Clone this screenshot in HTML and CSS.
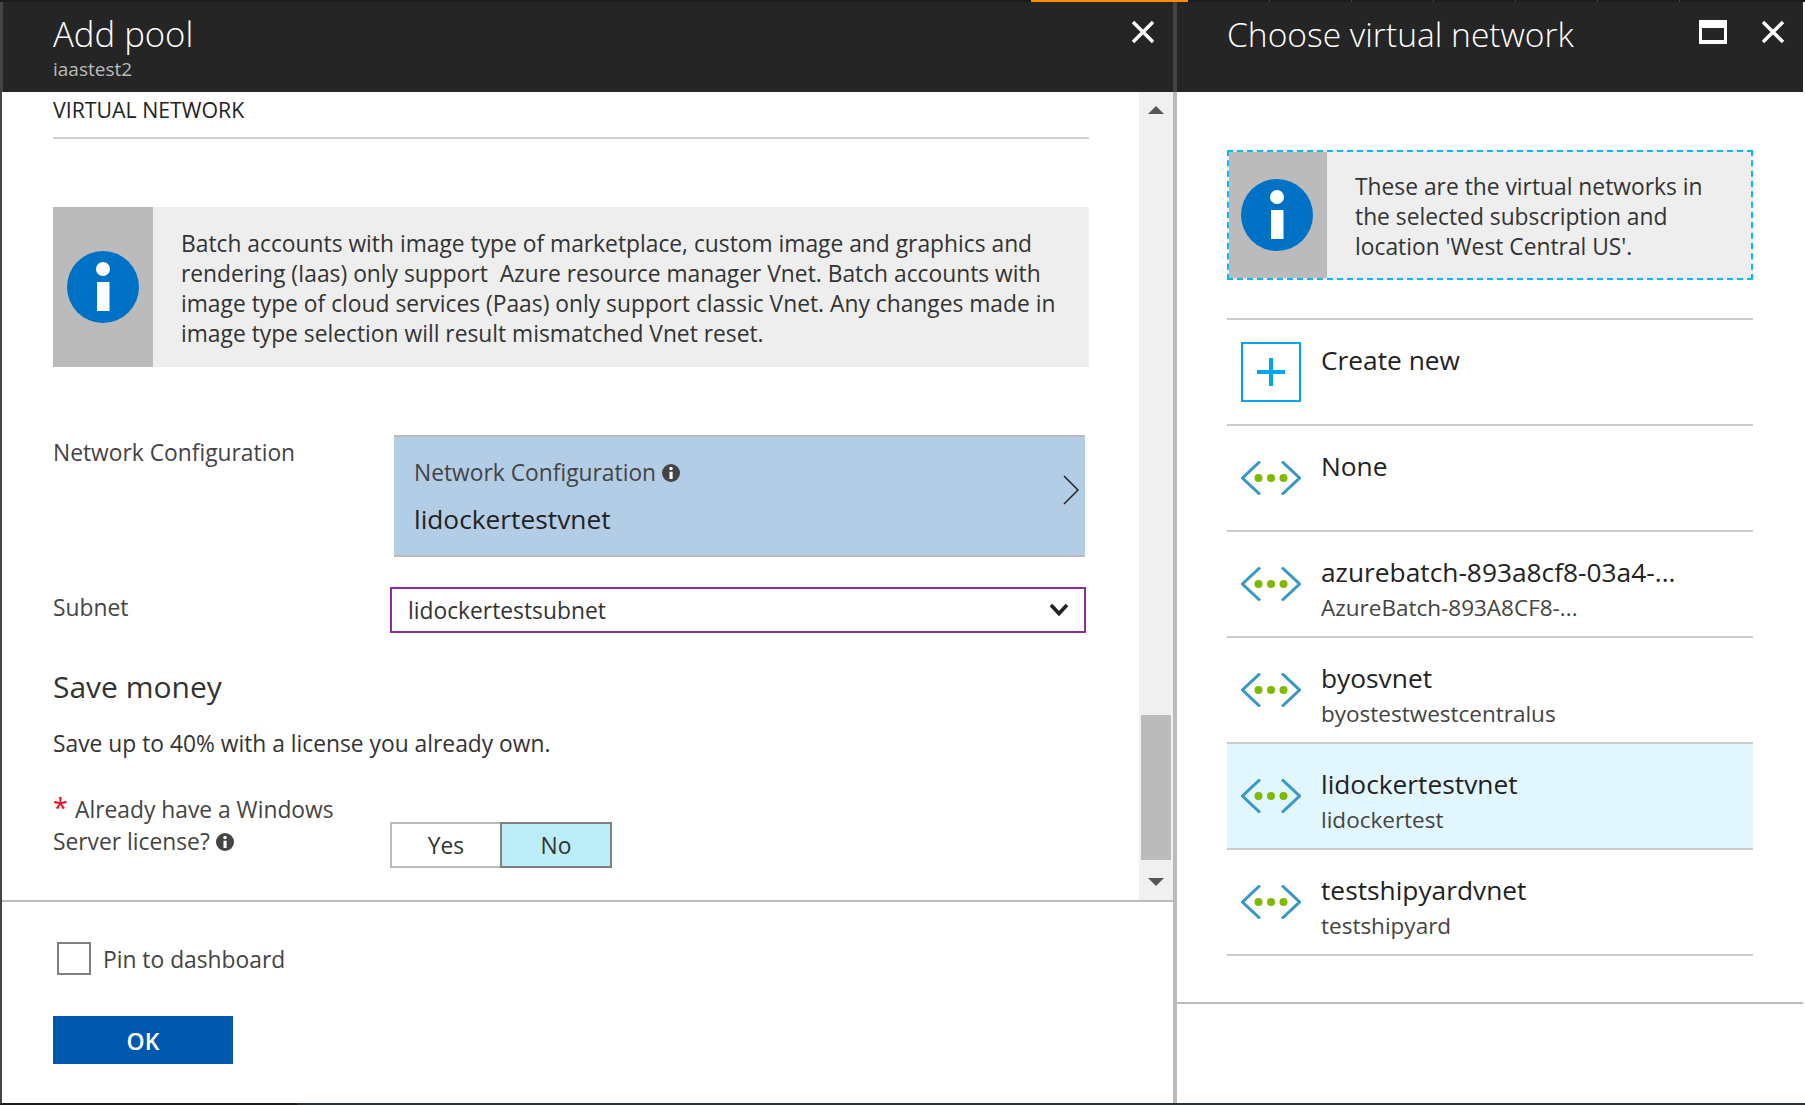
FILE: index.html
```html
<!DOCTYPE html>
<html lang="en">
<head>
    <meta charset="UTF-8">
    <title>Add pool</title>
    <link rel="stylesheet" href="styles.css">
</head>
<body>
    <svg class="sprites" width="0" height="0">
        <symbol id="info" viewBox="0 0 72 72">
            <circle cx="36" cy="36" r="36" fill="currentColor"/>
            <circle cx="36" cy="18" r="7" fill="#fff"/>
            <rect x="30" y="31" width="12.5" height="29" fill="#fff"/>
        </symbol>
        <symbol id="close" viewBox="0 0 24 24">
            <path d="M2 2 22 22M22 2 2 22" fill="none" stroke="#fff" stroke-width="3.4"/>
        </symbol>
        <symbol id="vnet" viewBox="0 0 60 34">
            <path d="M19 .5 1.5 17 19 33.5M41 .5 58.5 17 41 33.5" fill="none" stroke="#3999c6" stroke-width="3"/>
            <circle cx="17.5" cy="17" r="4" fill="#7fba00"/>
            <circle cx="30" cy="17" r="4" fill="#7fba00"/>
            <circle cx="42.5" cy="17" r="4" fill="#7fba00"/>
        </symbol>
    </svg>

    <div class="topbar">
        <span class="tab tab-first"></span>
        <span class="tab tab-active"></span>
        <span class="tab"></span>
        <span class="tab"></span>
        <span class="tab"></span>
        <span class="tab"></span>
        <span class="tab"></span>
        <span class="tab"></span>
    </div>

    <div class="blades">
        <section class="blade blade-left">
            <header class="blade-header">
                <div>
                    <h1>Add pool</h1>
                    <div class="subtitle">iaastest2</div>
                </div>
                <svg class="close-icon"><use href="#close"/></svg>
            </header>

            <div class="scroll-area">
                <div class="content">
                    <h2 class="section-title">VIRTUAL NETWORK</h2>

                    <div class="info-box">
                        <div class="info-side"><svg class="info-icon"><use href="#info"/></svg></div>
                        <p>Batch accounts with image type of marketplace, custom image and graphics and<br>
                        rendering (Iaas) only support &nbsp;Azure resource manager Vnet. Batch accounts with<br>
                        image type of cloud services (Paas) only support classic Vnet. Any changes made in<br>
                        image type selection will result mismatched Vnet reset.</p>
                    </div>

                    <div class="form-row row-network">
                        <label class="field-label">Network Configuration</label>
                        <div class="picker">
                            <div>
                                <div class="picker-label">Network Configuration <svg class="mini-info"><use href="#info"/></svg></div>
                                <div class="picker-value">lidockertestvnet</div>
                            </div>
                            <svg class="picker-arrow" viewBox="0 0 16 30"><path d="M1 1 15 15 1 29" fill="none" stroke="#222" stroke-width="1.5"/></svg>
                        </div>
                    </div>

                    <div class="form-row row-subnet">
                        <label class="field-label">Subnet</label>
                        <div class="dropdown">
                            <span>lidockertestsubnet</span>
                            <svg class="dropdown-arrow" viewBox="0 0 20 14"><path d="M2 2 10 10.5 18 2" fill="none" stroke="#222" stroke-width="3.6"/></svg>
                        </div>
                    </div>

                    <h3 class="save-title">Save money</h3>
                    <p class="save-text">Save up to 40% with a license you already own.</p>

                    <div class="form-row row-license">
                        <label class="field-label license-label">
                            <span class="required">*</span><span class="license-first">Already have a Windows</span><br>
                            Server license? <svg class="mini-info"><use href="#info"/></svg>
                        </label>
                        <div class="toggle">
                            <span class="toggle-item">Yes</span>
                            <span class="toggle-item toggle-on">No</span>
                        </div>
                    </div>
                </div>

                <div class="scrollbar">
                    <span class="arrow-up"></span>
                    <span class="thumb"></span>
                    <span class="arrow-down"></span>
                </div>
            </div>

            <footer class="blade-footer">
                <div class="pin">
                    <span class="checkbox"></span>
                    <span>Pin to dashboard</span>
                </div>
                <button class="ok-button">OK</button>
            </footer>
        </section>

        <section class="blade blade-right">
            <header class="blade-header">
                <h1>Choose virtual network</h1>
                <div class="header-actions">
                    <span class="maximize"></span>
                    <svg class="close-icon"><use href="#close"/></svg>
                </div>
            </header>

            <div class="right-body">
                <div class="info-box info-box-small">
                    <div class="info-side"><svg class="info-icon"><use href="#info"/></svg></div>
                    <p>These are the virtual networks in<br>
                    the selected subscription and<br>
                    location 'West Central US'.</p>
                </div>

                <ul class="vnet-list">
                    <li class="vnet-row">
                        <span class="plus-box"></span>
                        <div class="vnet-name">Create new</div>
                    </li>
                    <li class="vnet-row">
                        <svg class="vnet-icon"><use href="#vnet"/></svg>
                        <div class="vnet-name">None</div>
                    </li>
                    <li class="vnet-row">
                        <svg class="vnet-icon"><use href="#vnet"/></svg>
                        <div>
                            <div class="vnet-name">azurebatch-893a8cf8-03a4-...</div>
                            <div class="vnet-group">AzureBatch-893A8CF8-...</div>
                        </div>
                    </li>
                    <li class="vnet-row">
                        <svg class="vnet-icon"><use href="#vnet"/></svg>
                        <div>
                            <div class="vnet-name">byosvnet</div>
                            <div class="vnet-group">byostestwestcentralus</div>
                        </div>
                    </li>
                    <li class="vnet-row selected">
                        <svg class="vnet-icon"><use href="#vnet"/></svg>
                        <div>
                            <div class="vnet-name">lidockertestvnet</div>
                            <div class="vnet-group">lidockertest</div>
                        </div>
                    </li>
                    <li class="vnet-row">
                        <svg class="vnet-icon"><use href="#vnet"/></svg>
                        <div>
                            <div class="vnet-name">testshipyardvnet</div>
                            <div class="vnet-group">testshipyard</div>
                        </div>
                    </li>
                </ul>
            </div>
            <div class="right-footer"></div>
        </section>
    </div>

    <div class="bottombar"><span class="bottom-dark"></span><span class="bottom-slate"></span></div>
</body>
</html>
```

FILE: styles.css
```css
* {
    box-sizing: border-box;
}
html, body {
    margin: 0;
    height: 100%;
}
body {
    width: 1805px;
    height: 1105px;
    display: flex;
    flex-direction: column;
    overflow: hidden;
    background-color: #fff;
    font-family: "Open Sans", "Noto Sans", sans-serif;
    font-size: 22.8px;
    color: #333;
}
.sprites {
    position: absolute;
}
h1, h2, h3, p, ul {
    margin: 0;
    padding: 0;
    font-weight: normal;
}

/* portal strips */
.topbar {
    height: 2px;
    display: flex;
    background-color: #1b1b1b;
}
.tab {
    width: 82px;
    border-right: 1px solid #444;
}
.tab-first {
    width: 1031px;
    border-right: none;
}
.tab-active {
    width: 157px;
    background-color: #ff8c00;
    border-right: none;
}
.bottombar {
    height: 2px;
    display: flex;
}
.bottom-dark {
    width: 297px;
    background-color: #1b1b1b;
}
.bottom-slate {
    flex: 1;
    background-color: #25323b;
}

/* blades */
.blades {
    flex: 1;
    display: flex;
    min-height: 0;
}
.blade {
    display: flex;
    flex-direction: column;
}
.blade-left {
    width: 1177px;
    border-left: 2px solid #444;
    border-right: 4px solid #bbb;
}
.blade-right {
    width: 626px;
}
.blade-header {
    height: 90px;
    flex: none;
    display: flex;
    justify-content: space-between;
    align-items: flex-start;
    background-color: #252525;
    color: #fff;
    padding: 12px 18px 0 51px;
}
.blade-left .blade-header {
    margin-right: -4px;
    border-left: 1px solid #444;
    border-right: 4px solid #444;
    padding-left: 50px;
}
.blade-right .blade-header {
    padding-left: 50px;
}
.blade-header h1 {
    font-size: 34.7px;
    font-weight: 300;
    line-height: 40px;
}
.blade-right .blade-header h1 {
    font-size: 33.6px;
}
.subtitle {
    margin-top: 3px;
    font-size: 19px;
    line-height: 24px;
    color: #bbb;
}
.close-icon {
    width: 24px;
    height: 24px;
    margin-top: 6px;
}
.header-actions {
    display: flex;
    gap: 34px;
}
.maximize {
    width: 28px;
    height: 24px;
    margin-top: 6px;
    border: solid #fff;
    border-width: 8px 3px 4px;
}

/* left blade content */
.scroll-area {
    height: 810px;
    flex: none;
    display: flex;
    border-bottom: 2px solid #bbb;
}
.content {
    width: 1137px;
    padding: 0 50px 0 51px;
}
.section-title {
    height: 47px;
    padding-top: 1px;
    border-bottom: 2px solid #d0d0d0;
    margin-bottom: 68px;
    font-size: 21.3px;
    line-height: 34px;
    font-weight: 500;
    color: #222;
}
.info-box {
    display: flex;
    height: 160px;
    background-color: #eee;
}
.info-side {
    width: 100px;
    flex: none;
    display: flex;
    align-items: center;
    justify-content: center;
    background-color: #bbb;
}
.info-icon {
    width: 72px;
    height: 72px;
    color: #0072c6;
}
.info-box p {
    padding: 22px 0 0 28px;
    line-height: 30px;
    white-space: nowrap;
}
.form-row {
    display: flex;
}
.field-label {
    width: 337px;
    flex: none;
    line-height: 32px;
    color: #444;
}
.row-network {
    margin-top: 68px;
}
.row-network .field-label {
    margin-top: 2px;
}
.picker {
    width: 691px;
    height: 122px;
    margin-left: 4px;
    padding: 20px 6px 0 20px;
    display: flex;
    justify-content: space-between;
    background-color: #b3cde6;
    border-top: 2px solid #bbb;
    border-bottom: 2px solid #bbb;
}
.picker-label {
    height: 32px;
    line-height: 32px;
    color: #444;
}
.mini-info {
    width: 18px;
    height: 18px;
    color: #444;
    vertical-align: -1px;
}
.picker-value {
    margin-top: 13px;
    font-size: 26.3px;
    line-height: 34px;
    color: #222;
}
.picker-arrow {
    width: 16px;
    height: 30px;
    margin-top: 18px;
}
.row-subnet {
    margin-top: 30px;
}
.row-subnet .field-label {
    margin-top: 5px;
}
.dropdown {
    width: 696px;
    height: 46px;
    padding: 0 15px 0 16px;
    display: flex;
    align-items: center;
    justify-content: space-between;
    border: 2px solid #8a2da5;
}
.dropdown-arrow {
    width: 20px;
    height: 14px;
}
.save-title {
    margin-top: 32px;
    font-size: 30px;
    line-height: 44px;
}
.save-text {
    margin-top: 19px;
    line-height: 32px;
}
.row-license {
    margin-top: 34px;
}
.required {
    display: inline-block;
    width: 22px;
    font-size: 27px;
    line-height: 0;
    color: #e81123;
}
.toggle {
    display: flex;
    width: 222px;
    height: 46px;
    margin-top: 28px;
}
.toggle-item {
    width: 110px;
    display: flex;
    align-items: center;
    justify-content: center;
    border: 2px solid #bbb;
    border-right: none;
}
.toggle-on {
    width: 112px;
    background-color: #bbecf8;
    border: 2px solid #808080;
}

/* scrollbar */
.scrollbar {
    width: 34px;
    height: 808px;
    padding: 14px 2px 0;
    display: flex;
    flex-direction: column;
    align-items: center;
    background-color: #f0f0f0;
}
.arrow-up, .arrow-down {
    width: 0;
    height: 0;
    border-left: 8px solid transparent;
    border-right: 8px solid transparent;
}
.arrow-up {
    border-bottom: 8px solid #555;
}
.thumb {
    width: 30px;
    height: 145px;
    margin-top: 601px;
    background-color: #bbb;
}
.arrow-down {
    margin-top: 18px;
    border-top: 8px solid #555;
}

/* left blade footer */
.blade-footer {
    flex: 1;
    padding: 40px 0 0 51px;
}
.pin {
    display: flex;
    align-items: center;
    gap: 12px;
    margin-left: 4px;
    color: #444;
}
.pin span:last-child {
    padding-top: 2px;
}
.checkbox {
    width: 34px;
    height: 33px;
    border: 2px solid #808080;
}
.ok-button {
    display: block;
    width: 180px;
    height: 48px;
    margin-top: 41px;
    padding-top: 2px;
    border: none;
    background-color: #0058ad;
    color: #fff;
    font-family: inherit;
    font-size: 23px;
    font-weight: 600;
}

/* right blade */
.right-body {
    height: 912px;
    flex: none;
    padding: 58px 50px 0;
    border-bottom: 2px solid #bbb;
}
.info-box-small {
    height: 130px;
    border: 2px dashed #00bcf2;
}
.info-box-small .info-side {
    width: 98px;
    padding-right: 2px;
}
.info-box-small p {
    padding: 20px 0 0 28px;
}
.vnet-list {
    list-style: none;
    margin-top: 38px;
    border-bottom: 2px solid #ccc;
}
.vnet-row {
    height: 106px;
    display: flex;
    align-items: flex-start;
    gap: 20px;
    padding: 23px 0 0 14px;
    border-top: 2px solid #ccc;
    color: #222;
}
.selected {
    background-color: #e2f6fe;
}
.vnet-icon {
    width: 60px;
    height: 34px;
    margin-top: 12px;
}
.plus-box {
    position: relative;
    width: 60px;
    height: 60px;
    flex: none;
    margin-top: -1px;
    border: 2px solid #00a4ef;
}
.plus-box::before, .plus-box::after {
    content: "";
    position: absolute;
    background-color: #00a4ef;
}
.plus-box::before {
    left: 14px;
    top: 26px;
    width: 28px;
    height: 4px;
}
.plus-box::after {
    left: 26px;
    top: 14px;
    width: 4px;
    height: 28px;
}
.vnet-name {
    font-size: 26.3px;
    line-height: 34px;
}
.vnet-group {
    margin-top: 3px;
    font-size: 22.5px;
    line-height: 32px;
    color: #444;
}
```
